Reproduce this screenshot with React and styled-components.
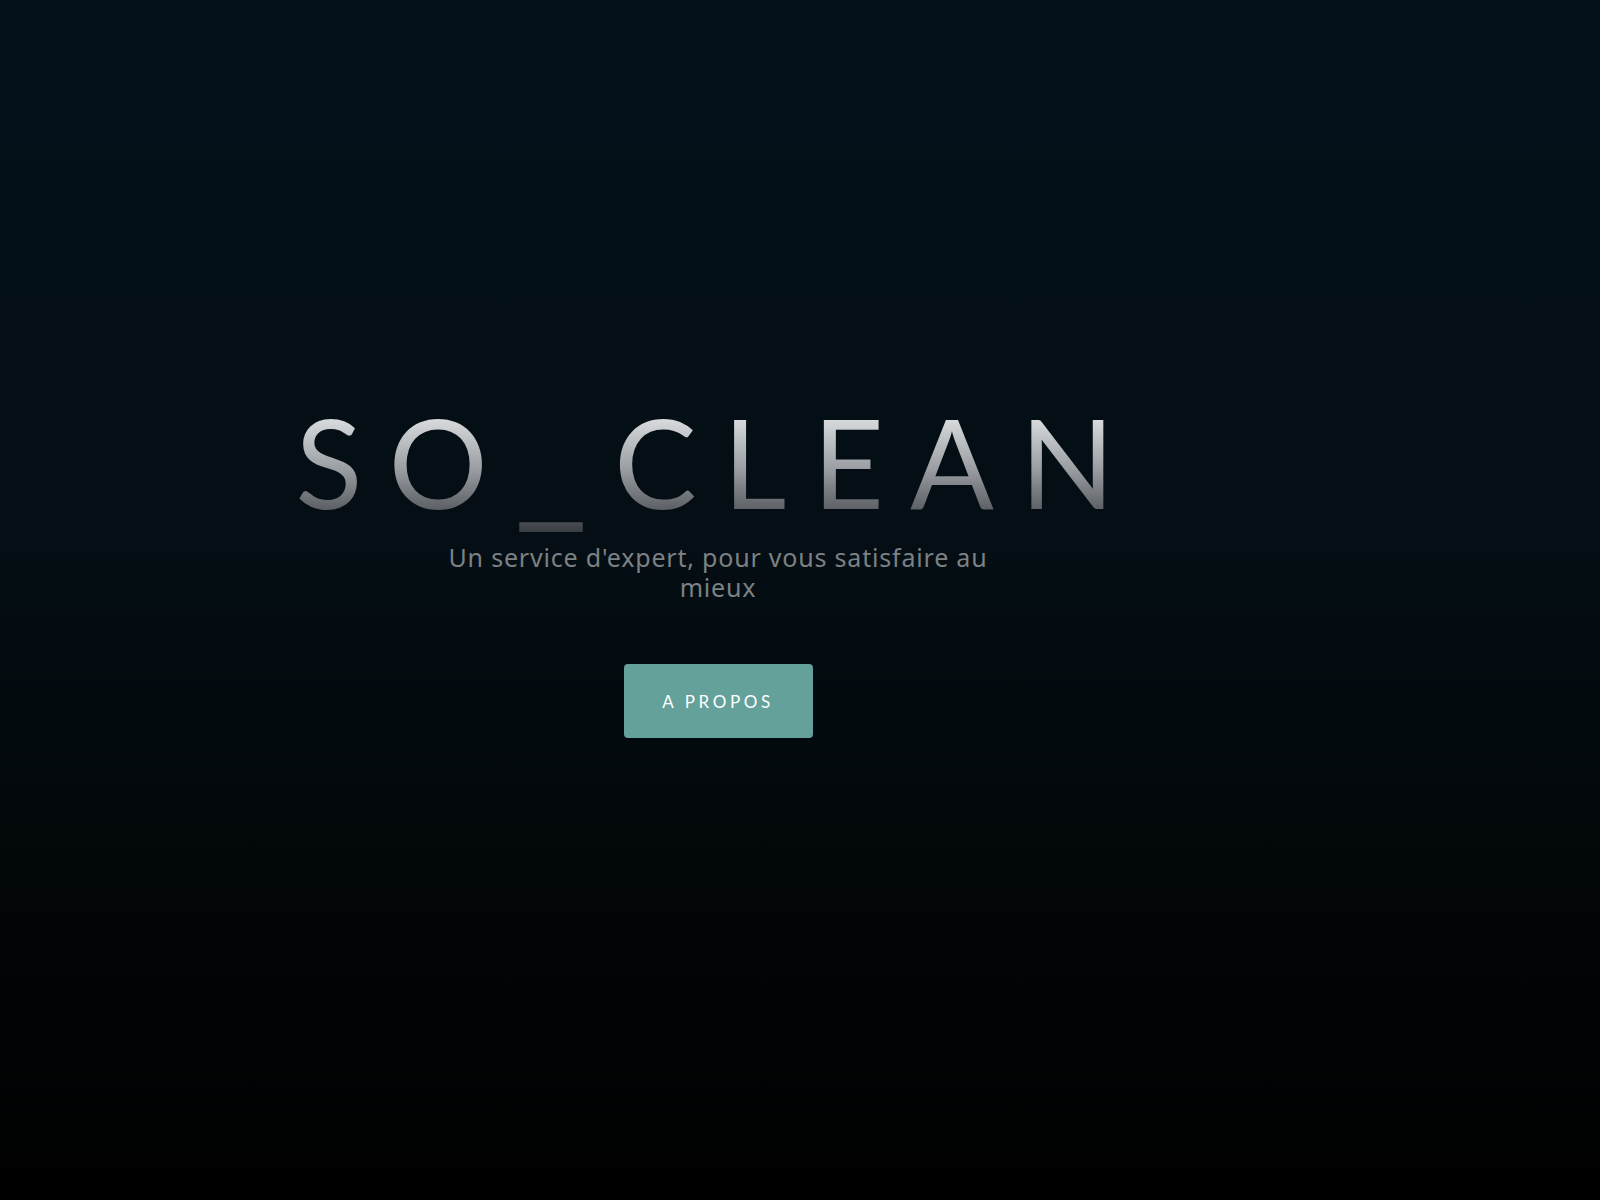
import React from "react";
import styled, { createGlobalStyle } from "styled-components";

const Global = createGlobalStyle`
  html, body { margin: 0; padding: 0; }
  body { background: #000; }
`;

const Hero = styled.section`
  height: 1200px;
  box-sizing: border-box;
  background: linear-gradient(180deg, #04111a 0%, #040e14 45%, #020608 75%, #000000 100%);
  display: flex;
  flex-direction: column;
  align-items: center;
  padding-top: 381px;
  padding-right: 164px;
  font-family: "Open Sans", "Noto Sans", sans-serif;
`;

const Title = styled.h1`
  margin: 0;
  font-family: "Lato", "Open Sans", sans-serif;
  font-weight: 400;
  font-size: 124px;
  line-height: 160px;
  letter-spacing: 26px;
  white-space: nowrap;
  background: linear-gradient(180deg, #f0f2f3 12%, #9a9ea2 55%, #2c3034 100%);
  -webkit-background-clip: text;
  background-clip: text;
  color: transparent;
`;

const Underscore = styled.span`
  font-weight: 400;
  font-size: 1.3em;
  line-height: 0;
`;

const Subtitle = styled.p`
  margin: 1px 0 0;
  max-width: 560px;
  text-align: center;
  font-family: "Noto Sans", sans-serif;
  font-size: 25px;
  line-height: 30px;
  letter-spacing: 0.8px;
  color: #7c8184;
`;

const Button = styled.button`
  margin-top: 62px;
  width: 189px;
  height: 74px;
  border: none;
  border-radius: 4px;
  background: #64a19b;
  color: #ffffff;
  font-family: "Lato", sans-serif;
  font-size: 17px;
  letter-spacing: 3.6px;
  text-transform: uppercase;
  cursor: pointer;
`;

export default function App() {
  return (
    <>
      <Global />
      <Hero>
        <Title>
          SO<Underscore>_</Underscore>CLEAN
        </Title>
        <Subtitle>Un service d'expert, pour vous satisfaire au mieux</Subtitle>
        <Button>A propos</Button>
      </Hero>
    </>
  );
}
